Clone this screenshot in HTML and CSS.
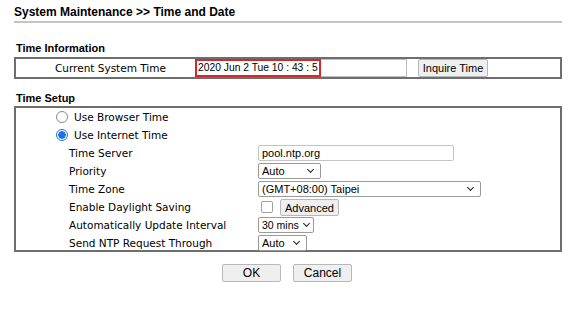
FILE: index.html
```html
<!DOCTYPE html>
<html>
<head>
<meta charset="utf-8">
<link rel="stylesheet" href="styles.css">
</head>
<body>
<div class="page">
  <div class="title">System Maintenance &gt;&gt; Time and Date</div>

  <div class="section-head">Time Information</div>
  <div class="box info">
    <div class="info-label">Current System Time</div>
    <div class="time-field"><span class="time-mark">2020 Jun 2 Tue 10 : 43 : 5</span></div>
    <button class="btn inquire">Inquire Time</button>
  </div>

  <div class="section-head setup-head">Time Setup</div>
  <div class="box setup">
    <div class="row radio-row">
      <span class="radio"></span><span class="label">Use Browser Time</span>
    </div>
    <div class="row radio-row">
      <span class="radio checked"></span><span class="label">Use Internet Time</span>
    </div>
    <div class="row">
      <span class="field-label">Time Server</span>
      <div class="ctrl"><div class="textbox server">pool.ntp.org</div></div>
    </div>
    <div class="row">
      <span class="field-label">Priority</span>
      <div class="ctrl"><div class="select w-priority">Auto<span class="chev"></span></div></div>
    </div>
    <div class="row">
      <span class="field-label">Time Zone</span>
      <div class="ctrl"><div class="select w-zone">(GMT+08:00) Taipei<span class="chev"></span></div></div>
    </div>
    <div class="row">
      <span class="field-label">Enable Daylight Saving</span>
      <div class="ctrl"><span class="checkbox"></span><button class="btn adv">Advanced</button></div>
    </div>
    <div class="row">
      <span class="field-label">Automatically Update Interval</span>
      <div class="ctrl"><div class="select w-interval">30 mins<span class="chev"></span></div></div>
    </div>
    <div class="row">
      <span class="field-label">Send NTP Request Through</span>
      <div class="ctrl"><div class="select w-through">Auto<span class="chev"></span></div></div>
    </div>
  </div>

  <div class="actions">
    <button class="btn action">OK</button>
    <button class="btn action">Cancel</button>
  </div>
</div>
</body>
</html>
```

FILE: styles.css
```css
* { box-sizing: border-box; }
html, body { margin: 0; padding: 0; background: #fff; }
body { font-family: "Liberation Sans", Arial, sans-serif; color: #000; }

.page { padding: 0 14px; width: 576px; }

.title {
  font-weight: bold;
  font-size: 12px;
  line-height: 14px;
  padding: 5px 0 2px 0;
  border-bottom: 2px solid #c4c4c4;
  height: 23px;
}

.section-head {
  font-weight: bold;
  font-size: 11px;
  line-height: 13px;
  margin-top: 19px;
  padding-left: 2px;
  height: 15px;
}
.setup-head { margin-top: 13px; height: 14px; }

.box {
  border: 2px solid #6e6e6e;
  width: 548px;
}

.info {
  height: 22px;
  display: flex;
  align-items: center;
}
.info-label {
  font-family: "DejaVu Sans", Verdana, sans-serif;
  font-size: 10.5px;
  width: 179px;
  padding-left: 39px;
}
.time-field {
  width: 212px;
  height: 18px;
  border: 1px solid #bdbdbd;
  font-size: 10.3px;
  display: flex;
}
.time-mark {
  border: 2px solid #d9262c;
  margin: -1px;
  padding: 0 1px;
  line-height: 14px;
  white-space: nowrap;
}
.btn {
  font-family: "Liberation Sans", Arial, sans-serif;
  font-size: 11px;
  background: #efefef;
  border: 1px solid #b8b8b8;
  border-radius: 2px;
  color: #000;
  padding: 0;
  height: 18px;
  line-height: 16px;
}
.inquire { width: 70px; margin-left: 11px; }

.setup { height: 146px; }
.row {
  display: flex;
  align-items: center;
  height: 18px;
  font-family: "DejaVu Sans", Verdana, sans-serif;
  font-size: 10.5px;
}
.radio-row { padding-left: 40px; }
.radio {
  width: 12px; height: 12px;
  border: 1px solid #8a8a8a;
  border-radius: 50%;
  margin-right: 6px;
  background: #fff;
}
.radio.checked {
  border: 1px solid #1a73e8;
  background: radial-gradient(circle, #1a73e8 0 3.5px, #fff 4px);
}
.field-label { width: 242px; padding-left: 53px; }
.ctrl { display: flex; align-items: center; font-family: "Liberation Sans", Arial, sans-serif; font-size: 11px; }
.textbox {
  height: 16px;
  border: 1px solid #c4c4c4;
  border-radius: 2px;
  line-height: 14px;
  padding-left: 3px;
}
.server { width: 196px; }
.select {
  position: relative;
  height: 16px;
  border: 1px solid #9a9a9a;
  border-radius: 2px;
  line-height: 14px;
  padding-left: 3px;
  white-space: nowrap;
}
.chev {
  position: absolute;
  right: 7px; top: 3px;
  width: 5px; height: 5px;
  border-right: 1.5px solid #222;
  border-bottom: 1.5px solid #222;
  transform: rotate(45deg);
}
.w-priority { width: 63px; }
.w-zone { width: 223px; }
.w-interval { width: 56px; font-size: 10.5px; }
.w-interval .chev { right: 4px; }
.w-through { width: 49px; }
.checkbox {
  width: 12px; height: 12px;
  border: 1px solid #a0a0a0;
  border-radius: 2px;
  margin: 0 7px 0 3px;
}
.adv { width: 59px; height: 17px; }

.actions {
  display: flex;
  justify-content: center;
  gap: 12px;
  margin-top: 12px;
  padding-right: 2px;
}
.action { width: 59px; font-size: 12px; }
```
